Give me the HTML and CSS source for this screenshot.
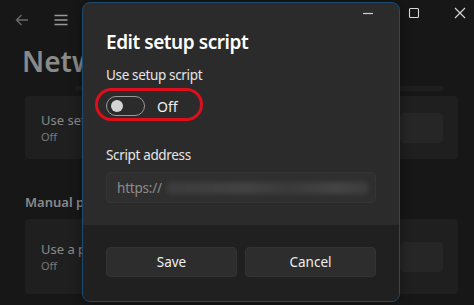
FILE: index.html
```html
<!DOCTYPE html>
<html>
<head>
<meta charset="utf-8">
<link rel="stylesheet" href="styles.css">
</head>
<body>
<div class="app">
  <div class="titlebar">
    <div class="nav">
      <svg class="ico back" width="16" height="16" viewBox="0 0 16 16"><path d="M14 8H2.5M7.5 3L2.5 8l5 5" fill="none" stroke="#6a6a6a" stroke-width="1.3"/></svg>
      <svg class="ico menu" width="16" height="16" viewBox="0 0 16 16"><path d="M1.5 3.5h13M1.5 8h13M1.5 12.5h13" fill="none" stroke="#9a9a9a" stroke-width="1.3"/></svg>
    </div>
    <div class="caption">
      <div class="cbtn"><svg width="12" height="12" viewBox="0 0 12 12"><path d="M1 6.5h10" stroke="#d0d0d0" stroke-width="1.2"/></svg></div>
      <div class="cbtn"><svg width="12" height="12" viewBox="0 0 12 12"><rect x="1.5" y="1.5" width="9" height="9" rx="1" fill="none" stroke="#d8d8d8" stroke-width="1.1"/></svg></div>
      <div class="cbtn"><svg width="12" height="12" viewBox="0 0 12 12"><path d="M1 1l10 10M11 1L1 11" stroke="#d8d8d8" stroke-width="1.1"/></svg></div>
    </div>
  </div>
  <h1 class="page-title"><span class="clip title-clip">Network &amp; internet</span></h1>
  <div class="strip"></div>
  <div class="card">
    <div class="card-text clip">
      <div class="card-name">Use setup script</div>
      <div class="card-sub">Off</div>
    </div>
    <div class="card-btn"></div>
  </div>
  <div class="section"><span class="clip sec-clip">Manual proxy setup</span></div>
  <div class="card tall">
    <div class="card-text clip">
      <div class="card-name">Use a proxy server</div>
      <div class="card-sub">Off</div>
    </div>
    <div class="card-btn"></div>
  </div>
</div>

<div class="dialog">
  <div class="dialog-body">
    <div class="dialog-title">Edit setup script</div>
    <div class="label">Use setup script</div>
    <div class="toggle-row">
      <div class="toggle"><div class="knob"></div></div>
      <span class="toggle-text">Off</span>
      <div class="highlight"></div>
    </div>
    <div class="label addr">Script address</div>
    <div class="textbox">
      <span class="ph">https://</span>
      <span class="blurred"></span>
    </div>
  </div>
  <div class="dialog-footer">
    <button class="btn">Save</button>
    <button class="btn">Cancel</button>
  </div>
</div>
</body>
</html>
```
FILE: styles.css
```css
* { box-sizing: border-box; }
html, body { margin: 0; padding: 0; }
body {
  width: 474px;
  height: 305px;
  overflow: hidden;
  background: #171717;
  font-family: "Noto Sans", "Open Sans", sans-serif;
  position: relative;
}
.app {
  display: flex;
  flex-direction: column;
  padding: 0 16px 0 25px;
  color: #8e8e8e;
}
.titlebar {
  position: relative;
  z-index: 2;
  height: 40px;
  display: flex;
  align-items: center;
  justify-content: space-between;
  margin: 0 -25px 0 -25px;
}
.nav { display: flex; align-items: center; gap: 23px; padding-left: 14px; }
.caption { display: flex; align-self: stretch; }
.cbtn {
  width: 46px;
  display: flex;
  align-items: center;
  justify-content: center;
  padding-bottom: 14px;
}
.clip {
  display: block;
  overflow: hidden;
  white-space: nowrap;
}
.page-title {
  margin: 2px 0 0 -3px;
  font-size: 28px;
  font-weight: 600;
  line-height: 38px;
  color: #8a8a8a;
  white-space: nowrap;
}
.title-clip { width: 60px; }
.strip {
  height: 5px;
  margin: 6px 14px 0 50px;
  background: #1e1e1e;
  border-radius: 3px;
}
.card {
  margin-top: 5px;
  height: 63px;
  background: #1f1f1f;
  border-radius: 4px;
  display: flex;
  align-items: center;
  justify-content: space-between;
  padding: 0 15px 0 16px;
}
.card.tall { height: 75px; margin-top: 8px; }
.card-text { width: 41px; }
.card-name { font-size: 13px; color: #8a8a8a; line-height: 17px; }
.card-sub { font-size: 11px; color: #7a7a7a; line-height: 15px; }
.card-btn {
  width: 43px;
  height: 30px;
  background: #262626;
  border-radius: 4px;
}
.section {
  margin-top: 34px;
  font-size: 13px;
  font-weight: 600;
  color: #8a8a8a;
  line-height: 18px;
}
.sec-clip { width: 57px; }

.dialog {
  position: absolute;
  z-index: 1;
  left: 82px;
  top: 2px;
  width: 318px;
  height: 300px;
  background: #2b2b2b;
  border: 1px solid #1d4b72;
  border-radius: 8px;
  overflow: hidden;
  display: flex;
  flex-direction: column;
  color: #ececec;
  box-shadow: 0 0 12px rgba(0,0,0,0.4);
}
.dialog-body {
  flex: 1;
  padding: 25px 23px 0 23px;
  display: flex;
  flex-direction: column;
}
.dialog-title {
  font-size: 19px;
  font-weight: 600;
  line-height: 28px;
  letter-spacing: -0.45px;
  color: #ffffff;
}
.label {
  margin-top: 9px;
  font-size: 13.5px;
  line-height: 20px;
  letter-spacing: -0.35px;
  color: #e6e6e6;
}
.toggle-row {
  position: relative;
  margin-top: 11px;
  display: flex;
  align-items: center;
  gap: 12px;
  height: 20px;
}
.toggle {
  width: 39px;
  height: 20px;
  border: 1px solid #9a9a9a;
  border-radius: 10px;
  display: flex;
  align-items: center;
  padding-left: 4px;
}
.knob {
  width: 12px;
  height: 12px;
  border-radius: 50%;
  background: #d4d4d4;
}
.toggle-text { font-size: 14px; color: #f0f0f0; }
.highlight {
  position: absolute;
  left: -11px;
  top: -8px;
  width: 108px;
  height: 33px;
  border: 3px solid #dc0f1c;
  border-radius: 17px;
}
.label.addr { margin-top: 29px; }
.textbox {
  margin-top: 7px;
  height: 31px;
  background: #2f2f2f;
  border: 1px solid #343434;
  border-radius: 4px;
  display: flex;
  align-items: center;
  padding-left: 10px;
  overflow: hidden;
}
.ph { font-size: 13.5px; color: #8c8c8c; letter-spacing: -0.2px; }
.blurred {
  flex: 1;
  height: 12px;
  margin: 0 6px 0 4px;
  border-radius: 6px;
  background: linear-gradient(90deg, #3c3c3c, #424242 40%, #3a3a3a 60%, #444 85%, #3c3c3c);
  filter: blur(2px);
}
.dialog-footer {
  height: 76px;
  background: #202020;
  display: flex;
  gap: 8px;
  padding: 22px 23px 0 23px;
}
.btn {
  flex: 1;
  height: 30px;
  background: #2d2d2d;
  border: 1px solid #333;
  border-radius: 4px;
  color: #f0f0f0;
  font-family: inherit;
  font-size: 13.5px;
  padding: 0;
}
```
